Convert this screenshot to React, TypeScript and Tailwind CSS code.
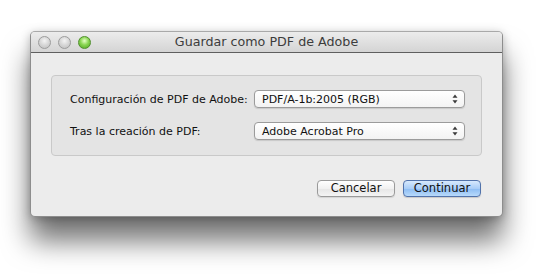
import React from "react";

const font = "font-['Lucida_Grande','DejaVu_Sans',sans-serif]";

const Light: React.FC<{ green?: boolean }> = ({ green }) => (
  <div
    className={
      green
        ? "w-[13px] h-[13px] rounded-full border border-[#4f8f2c] bg-[radial-gradient(circle_at_50%_35%,#e6ffc8_0%,#8ad653_45%,#4ea51f_100%)]"
        : "w-[13px] h-[13px] rounded-full border border-[#9c9c9c] bg-[radial-gradient(circle_at_50%_35%,#f4f4f4_0%,#d6d6d6_50%,#bdbdbd_100%)]"
    }
  />
);

const Arrows = () => (
  <svg width="6" height="10" viewBox="0 0 6 10" className="shrink-0">
    <path d="M3 0.5 L5.5 3.8 L0.5 3.8 Z" fill="#3a3a3a" />
    <path d="M3 9.5 L5.5 6.2 L0.5 6.2 Z" fill="#3a3a3a" />
  </svg>
);

const Popup: React.FC<{ value: string }> = ({ value }) => (
  <div className="w-[211px] h-[18px] shrink-0 flex items-center justify-between pl-[7px] pr-[6px] rounded-[4px] border border-[#9b9b9b] bg-[linear-gradient(#ffffff,#f3f3f3)] shadow-[0_1px_1px_rgba(0,0,0,0.12)] text-[11px] text-[#111]">
    <span className="leading-none">{value}</span>
    <Arrows />
  </div>
);

const Row: React.FC<{ label: string; value: string }> = ({ label, value }) => (
  <div className="flex items-center justify-between">
    <span className="text-[11px] text-[#111] leading-none whitespace-nowrap">{label}</span>
    <Popup value={value} />
  </div>
);

export default function App() {
  return (
    <div className={`w-[559px] h-[278px] bg-white pl-[30px] pt-[31px] ${font}`}>
      <div className="w-[473px] h-[186px] flex flex-col rounded-[5px] bg-[#ececec] border border-[#8d8d8d] border-t-[#a9a9a9] shadow-[0_24px_28px_rgba(0,0,0,0.55),0_2px_10px_rgba(0,0,0,0.25)] overflow-hidden">
        <div className="relative h-[21px] shrink-0 flex items-center justify-center border-b border-[#5f5f5f] bg-[linear-gradient(#ececec,#d4d4d4)]">
          <div className="absolute left-[7px] top-[4px] flex gap-[7px]">
            <Light />
            <Light />
            <Light green />
          </div>
          <span className="text-[12.7px] text-[#3c3c3c] leading-none pt-px">Guardar como PDF de Adobe</span>
        </div>
        <div className="flex-1 flex flex-col px-[20px] pt-[22px]">
          <div className="h-[81px] flex flex-col gap-[14px] pt-[14px] pl-[18px] pr-[16px] rounded-[4px] border border-[#c9c9c9] bg-[#e4e4e4]">
            <Row label="Configuración de PDF de Adobe:" value="PDF/A-1b:2005 (RGB)" />
            <Row label="Tras la creación de PDF:" value="Adobe Acrobat Pro" />
          </div>
          <div className="flex justify-end gap-[8px] mt-[24px] pr-px">
            <button className="w-[78px] h-[17px] flex items-center justify-center rounded-[4px] border border-[#9a9a9a] bg-[linear-gradient(#ffffff,#f1f1f1_50%,#e6e6e6_51%,#f4f4f4)] text-[11.5px] text-[#111] leading-none shadow-[0_1px_1px_rgba(0,0,0,0.1)]">
              Cancelar
            </button>
            <button className="w-[78px] h-[17px] flex items-center justify-center rounded-[4px] border border-[#5273ab] bg-[linear-gradient(#d7e9fd,#a9cdf7_50%,#8cbcf3_51%,#b8dafb)] text-[11.5px] text-[#111] leading-none shadow-[0_1px_1px_rgba(0,0,0,0.15)]">
              Continuar
            </button>
          </div>
        </div>
      </div>
    </div>
  );
}
